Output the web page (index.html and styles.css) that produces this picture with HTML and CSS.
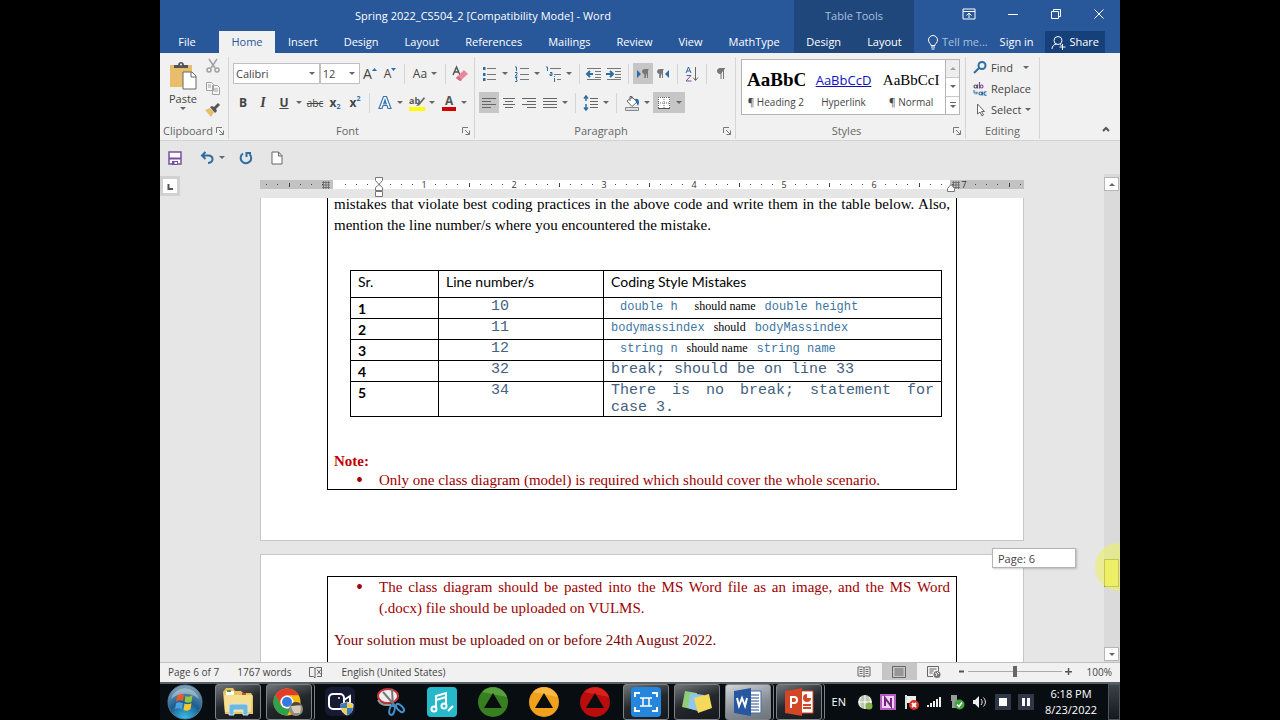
FILE: index.html
```html
<!DOCTYPE html>
<html lang="en">
  <head>
    <meta charset="utf-8">
    <meta name="viewport" content="width=device-width, initial-scale=1">
    <title>Spring 2022_CS504_2 [Compatibility Mode] - Word</title>
    <link rel="stylesheet" href="styles.css">
  </head>
  <body>
    <div class="screen">
      <header class="header">
        <div class="main-tabs">
          <h1 class="title">Spring 2022_CS504_2 [Compatibility Mode] - Word</h1>
          <nav class="tabs">
            <button class="tab file">File</button>
            <button class="tab active">Home</button>
            <button class="tab">Insert</button>
            <button class="tab">Design</button>
            <button class="tab">Layout</button>
            <button class="tab">References</button>
            <button class="tab">Mailings</button>
            <button class="tab">Review</button>
            <button class="tab">View</button>
            <button class="tab">MathType</button>
          </nav>
        </div>
        <div class="table-tools">
          <div class="title">Table Tools</div>
          <nav class="tabs">
            <button class="tab">Design</button>
            <button class="tab">Layout</button>
          </nav>
        </div>
        <div class="window-tools">
          <div class="window-buttons">
            <button aria-label="Ribbon display options"><svg width="14" height="12" viewBox="0 0 14 12"><path d="M1 1h12v10H1zM1 3.500h12M7 10V5M4.500 7.500 7 5l2.500 2.500" /></svg></button>
            <button aria-label="Minimize"><svg width="12" height="12" viewBox="0 0 12 12"><path d="M1 6.500h10" /></svg></button>
            <button aria-label="Restore"><svg width="12" height="12" viewBox="0 0 12 12"><path d="M1.500 3.500h7v7h-7zM3.500 3.500v-2h7v7h-2" /></svg></button>
            <button aria-label="Close"><svg width="12" height="12" viewBox="0 0 12 12"><path d="m1.500 1.500 9 9m0-9-9 9" /></svg></button>
          </div>
          <div class="account">
            <button class="tell"><svg width="12" height="15" viewBox="0 0 12 15"><path d="M4 10.500C4 8.500 1.500 8 1.500 5a4.500 4.500 0 0 1 9 0c0 3-2.500 3.500-2.500 5.500zM4 12h4M4.500 14h3" /></svg>Tell me...</button>
            <button>Sign in</button>
            <button class="share"><svg width="15" height="15" viewBox="0 0 15 15"><path d="M1 14c0-3 2-4.500 4.500-5M7 1.500a4 4 0 1 1 0 8 4 4 0 0 1 0-8zM9 9.500l1.500 1M11.500 9v6M8.500 12h6" /></svg>Share</button>
          </div>
        </div>
      </header>

      <section class="ribbon">
        <div class="group clipboard">
          <div class="clip-tools">
            <button class="paste">
              <svg width="28" height="30" viewBox="0 0 28 30">
                <path d="M1 4h22v22H1z" fill="#e8bd6c" />
                <path d="M5 7V4h4c0-4 6-4 6 0h4v3z" fill="#555" /><circle cx="12" cy="3.500" r="1" fill="#eee" />
                <path d="M14 11h9l4 4v13H14z" fill="#fff" stroke="#666" /><path d="M22 11v5h5" fill="none" stroke="#666" />
              </svg>
              Paste
              <span class="caret"></span>
            </button>
            <div class="clip-small">
              <button aria-label="Cut"><svg width="14" height="14" viewBox="0 0 14 14" fill="none" stroke="#a0a0a0" stroke-width="1.500"><path d="m3 0 6 9M11 0 5 9" /><circle cx="3" cy="11" r="2" /><circle cx="11" cy="11" r="2" /></svg></button>
              <button aria-label="Copy"><svg width="14" height="14" viewBox="0 0 14 14" fill="#f6f6f6" stroke="#a0a0a0"><path d="M.5 1.500h5l2 2v6h-7zM6.500 4.500h5l2 2v7h-7z" /><path d="M2 4h3M2 6h3M8 8h4M8 10h4" /></svg></button>
              <button aria-label="Format Painter"><svg width="15" height="14" viewBox="0 0 15 14"><path d="m0 7 5-2 4 4-3 5z" fill="#e8bd6c" /><path d="m5 4 2-1 2 1 4-4 2 2-4 4 1 2-2 2z" fill="#555" /></svg></button>
            </div>
          </div>
          <div class="group-label"><span>Clipboard</span><svg class="launch" width="8" height="8"><use href="#launcher" /></svg></div>
        </div>

        <div class="group">
          <div class="row">
            <label class="combo font-name"><select aria-label="Font"><option>Calibri</option></select><span class="caret"></span></label>
            <label class="combo font-size"><select aria-label="Font size"><option>12</option></select><span class="caret"></span></label>
            <button class="btn grow" aria-label="Grow font">A<svg width="5" height="12"><path d="M0 3h5L2.500 0z" fill="#2e6da4" /></svg></button>
            <button class="btn grow small" aria-label="Shrink font">A<svg width="5" height="12"><path d="M0 0h5L2.500 3z" fill="#2e6da4" /></svg></button>
            <i class="sep"></i>
            <button class="btn wide case">Aa<span class="caret"></span></button>
            <i class="sep"></i>
            <button class="btn" aria-label="Clear formatting"><svg width="16" height="16" viewBox="0 0 16 16"><path d="m1 9 3.500-8L8 9M2 6h5" fill="none" stroke="#555" stroke-width="1.500" /><path d="m4 12 8-8 4 4-8 7z" fill="#e8899a" /><path d="m4 12 2-2 4 4-2 1z" fill="#d9687c" /></svg></button>
          </div>
          <div class="row">
            <button class="btn bold">B</button>
            <button class="btn italic">I</button>
            <button class="btn wide underline"><span class="glyph">U</span><span class="caret"></span></button>
            <button class="btn strike">abc</button>
            <button class="btn script">x<sub>2</sub></button>
            <button class="btn script">x<sup>2</sup></button>
            <i class="sep"></i>
            <button class="btn wide" aria-label="Text effects"><svg width="16" height="16" viewBox="0 0 16 16"><path d="M6.500 1.500h3l4.500 12h-3l-1-3H6l-1 3H2zM8 5l-1.300 4h2.600z" fill="#fff" stroke="#3a74b4" stroke-width="1.200" /></svg><span class="caret"></span></button>
            <button class="btn wide" aria-label="Highlight"><svg width="16" height="16" viewBox="0 0 16 16"><text x="0" y="9" font-size="9" font-weight="bold" fill="#555">ab</text><path d="m15 2-6 7-2 2 3-.5 6-7z" fill="#666" /><path d="M0 12h16v4H0z" fill="#ff0" /></svg><span class="caret"></span></button>
            <button class="btn wide" aria-label="Font color"><svg width="16" height="16" viewBox="0 0 16 16"><text x="4" y="10" font-size="12" font-weight="bold" fill="#555">A</text><path d="M1 12h14v4H1z" fill="#d40000" /></svg><span class="caret"></span></button>
          </div>
          <div class="group-label"><span>Font</span><svg class="launch" width="8" height="8"><use href="#launcher" /></svg></div>
        </div>

        <div class="group">
          <div class="row">
            <button class="btn wide" aria-label="Bullets"><svg width="16" height="16" viewBox="0 0 16 16"><path d="M5 2.500h9M5 8.500h9M5 13.500h9" stroke="#777" /><path d="M1 1h2.500v3H1zM1 7h2.500v3H1zM1 12h2.500v3H1z" fill="#2e6da4" /></svg><span class="caret"></span></button>
            <button class="btn wide" aria-label="Numbering"><svg width="16" height="16" viewBox="0 0 16 16"><path d="M6 2.500h9M6 8.500h9M6 13.500h9" stroke="#777" /><path d="M1 1h1.500v4M1 6.500h2v1.500l-2 2h2.500M1 11.500h2l-1 1.500 1 1v1.500H1" fill="none" stroke="#2e6da4" /></svg><span class="caret"></span></button>
            <button class="btn wide" aria-label="Multilevel list"><svg width="16" height="16" viewBox="0 0 16 16"><path d="M4 2.500h11M8 8.500h7M11 13.500h4" stroke="#777" /><path d="M0 1h1.500v4M4 6.500h2v3H4v-1.500h2M8.500 10v1M8.500 12v4" fill="none" stroke="#2e6da4" /></svg><span class="caret"></span></button>
            <i class="sep"></i>
            <button class="btn" aria-label="Decrease indent"><svg width="16" height="14" viewBox="0 0 16 14"><path d="M1 1.500h14M9 4.500h6M9 7.500h6M9 10.500h6M1 12.500h14" stroke="#777" /><path d="M7 7H1.500M4 4 1 7l3 3" fill="none" stroke="#2e6da4" stroke-width="2" /></svg></button>
            <button class="btn" aria-label="Increase indent"><svg width="16" height="14" viewBox="0 0 16 14"><path d="M1 1.500h14M9 4.500h6M9 7.500h6M9 10.500h6M1 12.500h14" stroke="#777" /><path d="M0 7h6M4 4l3 3-3 3" fill="none" stroke="#2e6da4" stroke-width="2" /></svg></button>
            <i class="sep"></i>
            <button class="btn pressed" aria-label="Left to right"><svg width="14" height="12" viewBox="0 0 14 12"><path d="m1 2 4 4-4 4z" fill="#2e6da4" /><path d="M12.500 1.500h-4a2 2 0 0 0 0 4H9V10M9 2v8M11.500 2v8" fill="#777" stroke="#777" /></svg></button>
            <button class="btn" aria-label="Right to left"><svg width="14" height="12" viewBox="0 0 14 12"><path d="m13 2-4 4 4 4z" fill="#2e6da4" /><path d="M7.500 1.500h-4a2 2 0 0 0 0 4H4V10M4 2v8M6.500 2v8" fill="#777" stroke="#777" /></svg></button>
            <i class="sep"></i>
            <button class="btn" aria-label="Sort"><svg width="14" height="16" viewBox="0 0 14 16"><path d="M1 7 3.500 1 6 7M2 5h3" fill="none" stroke="#2e6da4" /><path d="M1.500 9.500H6L1 15h5.500" fill="none" stroke="#80489c" /><path d="M10.500 1v13M8 11.500l2.500 3 2.500-3" fill="none" stroke="#666" /></svg></button>
            <i class="sep"></i>
            <button class="btn" aria-label="Show marks"><svg width="12" height="13" viewBox="0 0 12 13"><path d="M10 1.500H5a2.500 2.500 0 0 0 0 5h1M6 1v11M8.500 1v11" fill="#777" stroke="#777" /></svg></button>
          </div>
          <div class="row">
            <button class="btn pressed" aria-label="Align left"><svg width="14" height="12" viewBox="0 0 14 12"><path d="M0 1.500h14M0 4.500h9M0 7.500h14M0 10.500h9" stroke="#666" /></svg></button>
            <button class="btn" aria-label="Center"><svg width="14" height="12" viewBox="0 0 14 12"><path d="M1 1.500h12M3 4.500h8M1 7.500h12M3 10.500h8" stroke="#666" /></svg></button>
            <button class="btn" aria-label="Align right"><svg width="14" height="12" viewBox="0 0 14 12"><path d="M0 1.500h14M5 4.500h9M0 7.500h14M5 10.500h9" stroke="#666" /></svg></button>
            <button class="btn wide" aria-label="Justify"><svg width="16" height="12" viewBox="0 0 16 12"><path d="M1 1.500h14M1 4.500h14M1 7.500h14M1 10.500h14" stroke="#666" /></svg><span class="caret"></span></button>
            <i class="sep"></i>
            <button class="btn wide" aria-label="Line spacing"><svg width="16" height="16" viewBox="0 0 16 16"><path d="M7 3.500h8M7 6.500h8M7 9.500h8M7 12.500h8" stroke="#666" /><path d="M3 1v5M3 9v6M1 3.500 3 1l2 2.500M1 12.500 3 15l2-2.500" fill="none" stroke="#2e6da4" stroke-width="1.500" /></svg><span class="caret"></span></button>
            <i class="sep"></i>
            <button class="btn wide" aria-label="Shading"><svg width="16" height="16" viewBox="0 0 16 16"><path d="m3 6 5-4 5 5-5 4.500z" fill="#fff" stroke="#666" /><path d="M6 6V1.500h2V4" fill="none" stroke="#666" /><path d="M11 4c4-1 5 3 3 7l-2-4z" fill="#2e6da4" /><path d="M1.500 12.500h13v3h-13z" fill="#ddd" stroke="#888" /></svg><span class="caret"></span></button>
            <button class="btn wide pressed" aria-label="Borders"><svg width="16" height="16" viewBox="0 0 16 16"><path d="M2 2h12v12H2z" fill="#fff" /><path d="M2.500 2v12M8 2v12M13.500 2v12M2 2.500h12M2 8h12" stroke="#666" stroke-dasharray="1 1" /><path d="M2 13.500h12" stroke="#555" /></svg><span class="caret"></span></button>
          </div>
          <div class="group-label"><span>Paragraph</span><svg class="launch" width="8" height="8"><use href="#launcher" /></svg></div>
        </div>

        <div class="group">
          <div class="gallery">
            <button class="style heading-2"><span class="sample">AaBbC</span><span>¶ Heading 2</span></button>
            <button class="style hyperlink"><span class="sample">AaBbCcD</span><span>Hyperlink</span></button>
            <button class="style normal"><span class="sample">AaBbCcI</span><span>¶ Normal</span></button>
            <div class="gallery-nav">
              <button class="off" aria-label="Previous styles"><span class="caret up"></span></button>
              <button aria-label="Next styles"><span class="caret"></span></button>
              <button class="more" aria-label="More styles"><span class="caret"></span></button>
            </div>
          </div>
          <div class="group-label"><span>Styles</span><svg class="launch" width="8" height="8"><use href="#launcher" /></svg></div>
        </div>

        <div class="group">
          <div class="editing">
            <button><svg width="14" height="13" viewBox="0 0 14 13" fill="none" stroke="#2e6da4" stroke-width="2"><circle cx="9" cy="4.500" r="3.500" /><path d="m6 7-5 5" /></svg>Find<span class="caret far"></span></button>
            <button><svg width="14" height="14" viewBox="0 0 14 14" fill="none"><circle cx="2.500" cy="4.500" r="1.500" stroke="#555" stroke-width="1.200" /><path d="M4.500 2.500v4" stroke="#555" stroke-width="1.200" /><circle cx="8.500" cy="4.500" r="1.500" stroke="#80489c" stroke-width="1.200" /><path d="M6.500 0v6.500" stroke="#80489c" stroke-width="1.200" /><circle cx="7.500" cy="11.500" r="1.500" stroke="#2e6da4" stroke-width="1.200" /><path d="M9.500 9.500v4M13.500 10a1.700 1.700 0 1 0 0 3" stroke="#2e6da4" stroke-width="1.200" /><path d="M1 8v3h3M3 9.500 4.500 11 3 12.500" stroke="#2e6da4" /></svg>Replace</button>
            <button><svg width="14" height="14" viewBox="0 0 14 14"><path d="M4.500 1v10l2.500-2 2 4 1.500-1-2-3.500h3z" fill="#fff" stroke="#666" /></svg>Select<span class="caret"></span></button>
          </div>
          <div class="group-label"><span>Editing</span></div>
        </div>
        <button class="collapse" aria-label="Collapse the ribbon"><svg width="8" height="6" viewBox="0 0 8 6"><path d="m1 5 3-3 3 3" fill="none" stroke="#555" stroke-width="2" /></svg></button>
      </section>

      <div class="quick-access">
        <button aria-label="Save"><svg width="14" height="14" viewBox="0 0 14 14"><path d="M1 1h12v12H1z" fill="#fff" stroke="#7a4fa3" stroke-width="1.500" /><path d="M1 7.500h12" stroke="#7a4fa3" stroke-width="2" /><path d="M4 10h6v4H4z" fill="#7a4fa3" /><path d="M6.500 11H9v2H6.500z" fill="#fff" /></svg></button>
        <button class="undo" aria-label="Undo"><svg width="14" height="13" viewBox="0 0 14 13"><path d="M2 4.500h6c6 0 6 7 0 7.500M5.500 1 2 4.500 5.500 8" fill="none" stroke="#2e6da4" stroke-width="2" /></svg><span class="caret"></span></button>
        <button aria-label="Repeat"><svg width="14" height="14" viewBox="0 0 14 14"><path d="M4 2.500A5.300 5.300 0 1 0 10.500 3M7.500 6V2H12" fill="none" stroke="#2e6da4" stroke-width="2" /></svg></button>
        <button aria-label="New"><svg width="12" height="14" viewBox="0 0 12 14"><path d="M1 1h6.500L11 4.500V13H1zM7.500 1v4H11" fill="#fff" stroke="#666" /></svg></button>
      </div>

      <main class="workspace">
        <button class="tab-stop" aria-label="Tab stop"><svg width="14" height="14" viewBox="0 0 14 14"><path d="M0 0h14v14H0z" fill="#fff" /><path d="M5.500 5v5H10" fill="none" stroke="#555" stroke-width="2" /></svg></button>
        <svg class="ruler" viewBox="0 0 764 22" height="22">
          <defs>
            <!-- one inch: eight divisions, the half inch as a short bar -->
            <pattern id="inch" width="90" height="9" x="74" y="4" patternUnits="userSpaceOnUse">
              <path d="M11 4h1v1h-1zM22 4h1v1h-1zM33 4h1v1h-1zM45 3h1v4h-1zM56 4h1v1h-1zM67 4h1v1h-1zM78 4h1v1h-1z" fill="#444" />
            </pattern>
            <symbol id="hash" viewBox="0 0 8 8"><path d="M1.500 0v8M4 0v8M6.500 0v8M0 1.500h8M0 4h8M0 6.500h8" stroke="#666" stroke-width=".8" /></symbol>
          </defs>
          <path d="M0 4h764v9H0z" fill="#fff" />
          <path d="M0 4h73v9H0zM690 4h74v9h-74z" fill="#c2c2c2" />
          <path d="M0 4h764v9H0z" fill="url(#inch)" />
          <use href="#hash" x="62" y="5" width="8" height="8" />
          <use href="#hash" x="692" y="5" width="8" height="8" />
          <g class="ruler-numbers">
            <text x="164" y="12">1</text><text x="254" y="12">2</text><text x="344" y="12">3</text><text x="434" y="12">4</text>
            <text x="524" y="12">5</text><text x="614" y="12">6</text><text x="704" y="12">7</text>
          </g>
          <path d="M115.500 1.500h7v3l-3.500 4-3.500-4zM119 8.500l3.500 3v3h-7v-3zM115.500 15.500h7v5h-7zM687.500 15.500v-3l3.500-4 3.500 4v3z" fill="#fff" stroke="#777" />
        </svg>

        <div class="document">
          <article class="page first">
            <div class="frame">
              <p class="intro">mistakes that violate best coding practices in the above code and write them in the table below. Also, mention the line number/s where you encountered the mistake.</p>
              <table class="mistakes">
                <colgroup><col class="sr"><col class="line"><col></colgroup>
                <thead>
                  <tr><th>Sr.</th><th>Line number/s</th><th>Coding Style Mistakes</th></tr>
                </thead>
                <tbody>
                  <tr><td class="num">1</td><td class="at">10</td><td class="fix in">double h<b class="far">should name</b>double height</td></tr>
                  <tr><td class="num">2</td><td class="at">11</td><td class="fix">bodymassindex<b>should</b>bodyMassindex</td></tr>
                  <tr><td class="num">3</td><td class="at">12</td><td class="fix in">string n<b>should name</b>string name</td></tr>
                  <tr><td class="num">4</td><td class="at">32</td><td class="code">break; should be on line 33</td></tr>
                  <tr><td class="num">5</td><td class="at">34</td><td class="code">There is no break; statement for case 3.</td></tr>
                </tbody>
              </table>
              <p class="note">Note:</p>
              <ul class="notes">
                <li>Only one class diagram (model) is required which should cover the whole scenario.</li>
              </ul>
            </div>
          </article>
          <article class="page second">
            <div class="frame">
              <ul class="notes loose">
                <li>The class diagram should be pasted into the MS Word file as an image, and the MS Word (.docx) file should be uploaded on VULMS.</li>
              </ul>
              <p class="deadline">Your solution must be uploaded on or before 24th August 2022.</p>
            </div>
          </article>
        </div>

        <div class="scrollbar">
          <button aria-label="Scroll up"><span class="caret up"></span></button>
          <div class="track"><div class="thumb"><div class="page-tip">Page: 6</div></div></div>
          <button aria-label="Scroll down"><span class="caret"></span></button>
        </div>
      </main>

      <footer class="status">
        <span>Page 6 of 7</span>
        <span>1767 words</span>
        <svg width="14" height="12" viewBox="0 0 14 12"><path d="M6 2.500 4.500 1.500H.5v9h4L6 12V2.500l1.500-1h5v9H8M8 3.500l4 5m0-5-4 5" fill="none" stroke="#666" /></svg>
        <span>English (United States)</span>
        <div class="views">
          <button aria-label="Read mode"><svg width="14" height="12" viewBox="0 0 14 12"><path d="M7 2 5.500 1H1v9h4.500L7 11l1.500-1H13V1H8.500zv9M2.500 3.500h3M2.500 5.500h3M2.500 7.500h3M8.500 3.500h3M8.500 5.500h3M8.500 7.500h3" fill="none" stroke="#666" /></svg></button>
          <button class="pressed" aria-label="Print layout"><svg width="14" height="12" viewBox="0 0 14 12"><path d="M.5.5h13v11H.5zM2.500 3h9M2.500 5h9M2.500 7h9M2.500 9h9" fill="none" stroke="#666" /></svg></button>
          <button aria-label="Web layout"><svg width="14" height="12" viewBox="0 0 14 12"><path d="M6 10.500H.5V.5h11V5M2.500 3h7M2.500 5h4M2.500 7h3" fill="none" stroke="#666" /><circle cx="10" cy="8.500" r="3.500" fill="#777" /><path d="m8 7 2 1-1 2M10 6l2 2" stroke="#eee" fill="none" /></svg></button>
        </div>
        <div class="zoom">
          <button aria-label="Zoom out"><svg width="7" height="7"><path d="M1 2.500h5v2H1z" fill="#555" /></svg></button>
          <input type="range" min="0" max="100" value="50" aria-label="Zoom">
          <button aria-label="Zoom in"><svg width="7" height="7"><path d="M0 3h7v1.500H0zM2.800 0h1.500v7H2.800z" fill="#555" /></svg></button>
          <span>100%</span>
        </div>
      </footer>

      <nav class="taskbar">
        <button class="start" aria-label="Start"><svg width="36" height="36" viewBox="0 0 36 36"><circle cx="18" cy="18" r="17" fill="url(#orb)" stroke="#54809c" /><path d="M10 12c2-2 4-2 7-1l-1 6c-3-1-5-1-7 1z" fill="#e85a2a" /><path d="M18.500 12c2 1 5 1 7-1l-1 7c-3 1-5 1-7-.5z" fill="#92c83e" /><path d="M9 19.500c2-2 4-1.500 7-.5l-1 6c-3-1-5-1-7 .5z" fill="#4aa3e0" /><path d="M17.500 19.500c2 1 5 1 7-.5l-1 6c-2 2-4 2-7 1z" fill="#fbc72f" /><path d="M4 15a14.500 14.500 0 0 1 28 0C24 8 12 8 4 15z" fill="#fff" opacity=".35" /></svg></button>
        <button class="task open" aria-label="Explorer"><svg width="32" height="30" viewBox="0 0 32 30"><path d="M1 5 4 1h7l2 3h6l2 2h8l2 3v18H3z" fill="#e8c25c" /><path d="M4 4h8v4H4z" fill="#fff" /><path d="M5 3h4v2H5z" fill="#4a9c38" /><path d="M20 6h4v2h-4z" fill="#d34b31" /><path d="M2 8h28l-1 17H3z" fill="#f5df93" /><path d="M7 28V20c0-2 1-3 3-3h13c2 0 3 1 3 3v8h-5v-5h-9v5z" fill="#70b7dc" stroke="#c7e9f8" /></svg></button>
        <button class="task open stacked" aria-label="Chrome"><svg width="32" height="30" viewBox="0 0 32 30"><circle cx="14" cy="15" r="13.500" fill="#fbbc09" /><path d="M2.300 8.200a13.500 13.500 0 0 1 23.400 0H14a7 7 0 0 0-6 10z" fill="#e53a2e" /><path d="M2.300 8.200A13.500 13.500 0 0 0 14 28.500L20 18a7 7 0 0 1-12 0z" fill="#2fa04e" /><circle cx="14" cy="15" r="6.500" fill="#fff" /><circle cx="14" cy="15" r="5" fill="#3478e5" /><circle cx="23" cy="22" r="7" fill="#948b7c" /><path d="M18 20c2-3 8-3 10 0l-1 6h-6z" fill="#d4cbbb" /><path d="M18 19c1-5 8-5 10-1z" fill="#4d443c" /></svg></button>
        <button class="task" aria-label="Recorder"><svg width="32" height="30" viewBox="0 0 32 30"><rect x="1" width="30" height="29" rx="6" fill="#161a33" /><rect x="5" y="7" width="15" height="15" rx="4" fill="none" stroke="#fff" stroke-width="2" /><path d="m20 13 6-4v9" fill="none" stroke="#fff" stroke-width="2" /><circle cx="15" cy="11" r="1" fill="#fff" /><path d="m23 15 6 2c0 6-1 9-6 11-5-2-6-5-6-11z" fill="#f4ce3c" stroke="#ddd" /><path d="M23 15v6h-6v-4zM23 21h6c-1 4-2 6-6 7z" fill="#397bc5" /></svg></button>
        <button class="task" aria-label="Snipping tool"><svg width="32" height="30" viewBox="0 0 32 30"><ellipse cx="13" cy="9" rx="10" ry="7" fill="#eee" stroke="#c7333c" stroke-width="2" /><path d="M3 13c3 6 9 5 13 5" stroke="#999" stroke-width="2" fill="none" /><path d="m8 5 14 16M17 2l1 18" stroke="#777" stroke-width="2" /><ellipse cx="17" cy="23" rx="2.500" ry="5" fill="none" stroke="#3e91cc" stroke-width="2" transform="rotate(15 17 23)" /><ellipse cx="25" cy="21" rx="2.500" ry="5" fill="none" stroke="#3e91cc" stroke-width="2" transform="rotate(-45 25 21)" /></svg></button>
        <button class="task" aria-label="Music editor"><svg width="32" height="30" viewBox="0 0 32 30"><rect x="1" width="30" height="30" rx="4" fill="#25b9ca" /><path d="M10 22V9l10-3v13M10 13l10-3M22 24l5-5" fill="none" stroke="#fff" stroke-width="2" /><circle cx="8" cy="22" r="2.500" fill="#25b9ca" stroke="#fff" stroke-width="2" /><circle cx="18" cy="19" r="2.500" fill="#25b9ca" stroke="#fff" stroke-width="2" /></svg></button>
        <button class="task" aria-label="Green"><svg width="30" height="30" viewBox="0 0 30 30"><circle cx="15" cy="15" r="15" fill="#387f22" /><path d="M4 5a15 15 0 0 1 25 5z" fill="#58a03d" /><path d="m15 6 9 15H6z" fill="#080d0d" /></svg></button>
        <button class="task" aria-label="Orange"><svg width="30" height="30" viewBox="0 0 30 30"><circle cx="15" cy="15" r="15" fill="#efa01c" /><path d="M4 5a15 15 0 0 1 25 5z" fill="#fbb944" /><path d="m15 6 9 15H6z" fill="#080d0d" /></svg></button>
        <button class="task" aria-label="Red"><svg width="30" height="30" viewBox="0 0 30 30"><circle cx="15" cy="15" r="15" fill="#b90c0c" /><path d="M4 5a15 15 0 0 1 25 5z" fill="#db2020" /><path d="m15 6 9 15H6z" fill="#080d0d" /></svg></button>
        <button class="task open" aria-label="Screen capture"><svg width="32" height="30" viewBox="0 0 32 30"><rect x="1" width="30" height="30" rx="4" fill="#2487dd" /><path d="M5 10V6h5M22 6h5v4M5 20v4h5M22 24h5v-4" fill="none" stroke="#fff" stroke-width="2" /><path d="M10 11h12M10 19h12M13 11v8M19 11v8" fill="none" stroke="#fff" stroke-width="1.500" /></svg></button>
        <button class="task open" aria-label="Sticky notes"><svg width="32" height="30" viewBox="0 0 32 30"><path d="m4 4 12 2-2 17-13-3z" fill="#91cc79" /><path d="m9 6 14 2-3 17-13-4z" fill="#90c7e7" /><path d="m13 11 15-4 3 14-14 5z" fill="#f4d95b" /></svg></button>
        <button class="task open current stacked" aria-label="Word"><svg width="32" height="30" viewBox="0 0 32 30"><path d="M16 4h13v22H16z" fill="#fff" stroke="#3e6db0" /><path d="M19 8h8M19 11h8M19 14h8M19 17h8M19 20h8M19 23h8" stroke="#294c83" /><path d="m2 4 17-3v28L2 26z" fill="#2757a0" /><path d="m5 11 2 8 3-8 3 8 2-8" fill="none" stroke="#fff" stroke-width="2" /></svg></button>
        <button class="task open stacked" aria-label="PowerPoint"><svg width="32" height="30" viewBox="0 0 32 30"><path d="M16 4h14v22H16z" fill="#fff" stroke="#d24726" /><circle cx="24" cy="11" r="4" fill="#d24726" /><path d="M24 11V6h5v5z" fill="#fff" /><path d="M20 18h8M20 21h8" stroke="#d24726" stroke-width="2" /><path d="m2 4 17-3v28L2 26z" fill="#d24726" /><path d="M8 21V10h3a3 3 0 0 1 0 6H8" fill="none" stroke="#fff" stroke-width="2" /></svg></button>
        <div class="tray">
          <span class="lang">EN</span>
          <svg width="16" height="16" viewBox="0 0 16 16"><circle cx="8" cy="8" r="7" fill="#b9c7b2" /><path d="M8 1v14M1 8h14M4 3c-2 4-2 6 0 10M12 3c2 4 2 6 0 10" stroke="#fff" fill="none" /><circle cx="12" cy="12" r="3.500" fill="#83b546" /></svg>
          <svg width="16" height="16" viewBox="0 0 16 16"><path d="M1 1h14v14H1z" fill="#efd5f2" stroke="#b65fc0" stroke-width="2" /><path d="M5 12V4l6 8V4" fill="none" stroke="#73257c" stroke-width="2" /></svg>
          <svg width="16" height="16" viewBox="0 0 16 16"><path d="M3 1v14" stroke="#ddd" stroke-width="2" /><path d="M4 2h9v7H4z" fill="#eee" /><circle cx="11" cy="11" r="5" fill="#d83329" /><path d="m9 9 4 4m0-4-4 4" stroke="#fff" stroke-width="2" /></svg>
          <svg width="16" height="16" viewBox="0 0 16 16"><path d="M2 13v-2M5 13V9M8 13V7M11 13V5M14 13V3" stroke="#eee" stroke-width="2" /></svg>
          <svg width="16" height="16" viewBox="0 0 16 16"><path d="M2 1h6v6H2zM3 7h4v7H3z" fill="#999" /><circle cx="10.500" cy="10.500" r="5" fill="#3fa63a" /><path d="m8 10.500 2 2 3-4" stroke="#fff" stroke-width="1.500" fill="none" /></svg>
          <svg width="16" height="16" viewBox="0 0 16 16"><path d="M1 6h2l4-4v12l-4-4H1z" fill="#eee" /><path d="M9 5c1.500 2 1.500 4 0 6M11.500 3.500c2.500 3 2.500 6 0 9" stroke="#eee" fill="none" /></svg>
          <svg width="16" height="16" viewBox="0 0 16 16"><path d="M0 0h16v16H0z" fill="#303746" /><path d="M4 4h8v8H4z" fill="#fff" /></svg>
          <svg width="16" height="16" viewBox="0 0 16 16"><path d="M0 0h16v16H0z" fill="#303746" /><path d="M4 4h3v8H4zM9 4h3v8H9z" fill="#fff" /></svg>
        </div>
        <div class="clock"><span>6:18 PM</span><span>8/23/2022</span></div>
        <button class="peek" aria-label="Show desktop"></button>
      </nav>
    </div>

    <svg class="defs" width="0" height="0">
      <symbol id="launcher" viewBox="0 0 8 8"><path d="M.5 6V.5H6M3 3l4 4M7.500 3.500v4h-4" fill="none" stroke="#777" /></symbol>
      <radialGradient id="orb" cy="1" r="1"><stop offset="0" stop-color="#37c6ee" /><stop offset=".5" stop-color="#1c5c90" /><stop offset="1" stop-color="#86a5b8" /></radialGradient>
    </svg>
  </body>
</html>
```
FILE: styles.css
```css
* {
  box-sizing: border-box;
}

body {
  margin: 0;
  background: #000;
  color: #444;
  font-family: "Open Sans", "Noto Sans", sans-serif;
  font-size: 11px;
  line-height: 16px;
}

button,
select,
input {
  margin: 0;
  padding: 0;
  border: 0;
  background: none;
  color: inherit;
  font: inherit;
}

svg {
  flex: none;
  overflow: visible;
}

.defs {
  position: absolute;
}

.screen {
  display: flex;
  flex-direction: column;
  width: 75%;
  height: 100vh;
  margin: 0 auto;
  overflow: hidden;
  background: #e6e6e6;
}

.caret {
  flex: none;
  border: 3px solid transparent;
  border-top-color: #666;
  border-bottom: 0;
}

.caret.up {
  border-top: 0;
  border-bottom: 3px solid #666;
}

/* title bar and tabs */

.header {
  display: grid;
  grid-template-columns: 634fr 120fr 206fr;
  background: #28579a;
  color: #fff;
  white-space: nowrap;
}

.header > div {
  min-width: 0;
}

.title {
  height: 31px;
  margin: 0;
  font-size: 11px;
  font-weight: normal;
  line-height: 31px;
  text-align: center;
}

.main-tabs .title {
  padding-left: 12px;
}

.tabs {
  display: flex;
  height: 22px;
}

.tab {
  padding: 0 13px;
}

.tab.file {
  width: 59px;
  padding: 0 5px 0 0;
}

.tab.active {
  width: 56px;
  padding: 0;
  background: #f1f1f1;
  color: #28579a;
}

.table-tools {
  background: #20477b;
}

.table-tools .title {
  color: #a9c0e0;
}

.table-tools .tabs {
  justify-content: center;
}

.window-buttons {
  display: flex;
  justify-content: space-around;
  height: 31px;
  padding: 0 0 0 32px;
}

.window-buttons svg,
.account svg {
  fill: none;
  stroke: #fff;
}

.account {
  display: flex;
  align-items: center;
  justify-content: space-between;
  height: 22px;
  padding: 0 15px 0 13px;
}

.account button {
  display: flex;
  align-items: center;
  gap: 3px;
  height: 22px;
}

.account .tell {
  color: #a9c0e0;
}

.account .share {
  padding: 0 6px;
  background: #164079;
}

/* ribbon */

.ribbon {
  display: grid;
  grid-template-columns: 69fr 246fr 261fr 230fr 74fr 80fr;
  height: 88px;
  padding-top: 4px;
  border-bottom: 1px solid #d2d2d2;
  background: #f1f1f1;
}

.group {
  display: flex;
  flex-direction: column;
  min-width: 0;
  margin-bottom: 1px;
  padding: 2px 4px 0;
  border-right: 1px solid #d5d5d5;
}

.group-label {
  display: flex;
  align-items: center;
  height: 16px;
  margin-top: auto;
  color: #666;
}

.group-label span {
  flex: 1;
  text-align: center;
}

.row {
  display: flex;
  align-items: center;
  height: 29px;
}

.btn {
  display: flex;
  flex: none;
  align-items: center;
  justify-content: center;
  width: 20px;
  height: 21px;
  font-size: 12px;
}

.btn.wide {
  gap: 4px;
  width: 32px;
}

.pressed {
  background: #c6c6c6;
}

.sep {
  flex: none;
  width: 1px;
  height: 20px;
  margin: 0 4px;
  background: #d5d5d5;
}

.combo {
  position: relative;
  height: 21px;
  border: 1px solid #c0c0c0;
  background: #fff;
}

.combo select {
  width: 100%;
  height: 19px;
  padding-left: 2px;
  appearance: none;
}

.combo .caret {
  position: absolute;
  top: 8px;
  right: 4px;
}

.font-name {
  width: 88px;
}

.font-size {
  width: 41px;
}

.grow {
  font-size: 14px;
}

.grow.small {
  font-size: 12px;
}

.bold,
.script {
  font-weight: bold;
}

.italic {
  font-family: "Liberation Serif", serif;
  font-size: 14px;
  font-style: italic;
  font-weight: bold;
}

.underline .glyph {
  width: 16px;
  font-weight: bold;
  text-decoration: underline;
}

.strike {
  font-size: 10px;
  text-decoration: line-through;
}

.script sub,
.script sup {
  padding: 3px 0;
  color: #2e6da4;
  font-size: 7px;
  line-height: 7px;
}

.script sub {
  align-self: flex-end;
}

.script sup {
  align-self: flex-start;
}

.clip-tools {
  display: flex;
  justify-content: space-between;
}

.paste {
  display: flex;
  flex-direction: column;
  align-items: center;
  width: 40px;
  padding-top: 2px;
}

.clip-small {
  display: flex;
  flex-direction: column;
  gap: 7px;
  padding-right: 4px;
}

.clip-small button {
  height: 15px;
}

.clipboard {
  padding-left: 3px;
}

.clipboard .group-label span {
  text-align: left;
}

/* style gallery */

.gallery {
  display: flex;
  height: 56px;
  margin: 0 1px;
  border: 1px solid #b5b5b5;
  background: #fff;
  white-space: nowrap;
}

.style {
  display: flex;
  flex: 1;
  flex-direction: column;
  align-items: center;
  min-width: 0;
  padding: 7px 5px 0;
  font-size: 10px;
}

.sample {
  height: 27px;
  color: #000;
  font-size: 13px;
  line-height: 26px;
}

.heading-2 .sample {
  max-width: 100%;
  overflow: hidden;
  font-family: "Liberation Serif", serif;
  font-size: 19px;
  font-weight: bold;
}

.hyperlink .sample {
  color: #1010c0;
  text-decoration: underline;
}

.normal .sample {
  font-family: "Liberation Serif", serif;
  font-size: 15px;
}

.gallery-nav {
  display: flex;
  flex-direction: column;
  width: 14px;
  border-left: 1px solid #b5b5b5;
}

.gallery-nav button {
  display: flex;
  flex: 1;
  flex-direction: column;
  align-items: center;
  justify-content: center;
}

.gallery-nav button + button {
  border-top: 1px solid #c8c8c8;
}

.gallery-nav .off {
  background: #e4e4e4;
  opacity: .6;
}

.gallery-nav .more::before {
  width: 6px;
  height: 1px;
  margin-bottom: 2px;
  background: #666;
  content: "";
}

.editing {
  margin-top: -2px;
}

.editing button {
  display: flex;
  align-items: center;
  gap: 4px;
  height: 21px;
  padding-left: 3px;
}

.editing .far {
  margin-left: 6px;
}

.collapse {
  align-self: end;
  justify-self: end;
  width: 28px;
  height: 14px;
}

.collapse svg {
  display: block;
  margin: 0 auto 8px;
}

.quick-access {
  display: flex;
  align-items: center;
  gap: 18px;
  height: 33px;
  padding-left: 8px;
}

.quick-access button {
  display: flex;
  align-items: center;
}

.quick-access .undo {
  gap: 5px;
}

.quick-access .undo + button {
  margin-left: -4px;
}

/* ruler, pages and scroll bar */

.workspace {
  display: grid;
  flex: 1;
  grid-template-columns: 100fr 764fr 80fr 16px;
  grid-template-rows: 24px 1fr;
  min-height: 0;
}

.tab-stop {
  width: 20px;
  height: 20px;
  margin-top: 2px;
  background: #d2d2d2;
}

.tab-stop svg {
  display: block;
  margin: 3px;
}

.ruler {
  align-self: start;
  width: 100%;
  margin-top: 2px;
}

.ruler-numbers {
  fill: #333;
  font-size: 9px;
  text-anchor: middle;
}

.document {
  grid-column: 2;
  grid-row: 2;
  overflow: hidden;
  color: #000;
  font-family: "Liberation Serif", serif;
  font-size: 15px;
  line-height: 21px;
}

.page {
  padding: 0 66px 50px;
  border: 1px solid #c6c6c6;
  background: #fff;
}

.page.first {
  margin: -5px 0 13px;
}

.page.second {
  padding-top: 21px;
}

.frame {
  padding: 0 6px;
  border: 1px solid #000;
}

.first .frame {
  border-top: 0;
}

.document p,
.notes {
  margin: 0;
}

.intro {
  text-align: justify;
}

.mistakes {
  width: 592px;
  max-width: 100%;
  margin: 34px 0 34px 16px;
  border-collapse: collapse;
  table-layout: fixed;
}

.mistakes .sr {
  width: 88px;
}

.mistakes .line {
  width: 165px;
}

.mistakes th,
.mistakes td {
  padding: 0 7px;
  border: 1px solid #000;
  vertical-align: top;
}

.mistakes th {
  height: 27px;
  font-family: Lato, sans-serif;
  font-size: 14px;
  font-weight: normal;
  text-align: left;
}

.mistakes .num {
  padding-top: 2px;
  font-family: Lato, sans-serif;
  font-size: 14px;
  font-weight: bold;
  line-height: 18px;
}

.mistakes .at,
.mistakes .code {
  color: #44617f;
  font-family: "Liberation Mono", monospace;
  font-size: 15px;
  line-height: 17px;
}

.mistakes .at {
  padding-left: 52px;
}

.mistakes .code {
  text-align: justify;
}

.mistakes .fix {
  color: #3c75a3;
  font-family: "Liberation Mono", monospace;
  font-size: 12px;
  line-height: 17px;
}

.mistakes .fix.in {
  padding-left: 16px;
}

.fix b {
  margin: 0 9px;
  color: #000;
  font-family: "Liberation Serif", serif;
  font-weight: normal;
}

.fix .far {
  margin-left: 17px;
}

.note {
  color: #c00000;
  font-weight: bold;
}

.notes {
  padding-left: 45px;
  color: #a00000;
  line-height: 17px;
  list-style: none;
  text-align: justify;
}

.notes li::before {
  float: left;
  margin-left: -23px;
  font-size: 20px;
  content: "•";
}

.notes.loose {
  line-height: 21px;
}

.deadline {
  padding: 11px 0 40px;
  color: #800000;
}

.scrollbar {
  display: flex;
  grid-column: 4;
  grid-row: 1 / 3;
  flex-direction: column;
  min-height: 0;
  padding: 3px 1px 1px 0;
  background: #dadada;
}

.scrollbar button {
  display: flex;
  flex: none;
  align-items: center;
  justify-content: center;
  height: 14px;
  border: 1px solid #b5b5b5;
  background: #fff;
}

.track {
  flex: 1;
  padding-top: 368px;
}

.thumb {
  position: relative;
  height: 28px;
  border: 1px solid #8a8a40;
  background: #eef06c;
}

/* pointer highlight around the thumb */
.thumb::before {
  position: absolute;
  top: -17px;
  left: -10px;
  width: 48px;
  height: 48px;
  border-radius: 50%;
  background: rgba(236, 240, 100, .6);
  content: "";
}

.page-tip {
  position: absolute;
  top: -12px;
  right: 42px;
  width: 84px;
  height: 20px;
  padding-left: 5px;
  border: 1px solid #b5b5b5;
  background: #fff;
  box-shadow: 1px 1px 2px rgba(0, 0, 0, .2);
  line-height: 20px;
}

/* status bar */

.status {
  display: flex;
  align-items: center;
  gap: 18px;
  height: 20px;
  padding: 0 8px 2px;
  border-top: 1px solid #c0c0c0;
  background: #f1f1f1;
  font-size: 10px;
  white-space: nowrap;
}

.views {
  display: flex;
  margin-left: auto;
}

.views button {
  display: flex;
  align-items: center;
  justify-content: center;
  width: 35px;
  height: 17px;
}

.zoom {
  display: flex;
  align-items: center;
  gap: 3px;
  margin-left: -12px;
}

.zoom button {
  display: flex;
}

.zoom input {
  width: 94px;
  height: 12px;
  appearance: none;
  background: linear-gradient(#aaa, #aaa) center / 100% 1px no-repeat;
}

.zoom input::-webkit-slider-thumb {
  width: 4px;
  height: 11px;
  appearance: none;
  background: #666;
}

.zoom span {
  margin-left: 12px;
}

/* taskbar */

.taskbar {
  display: flex;
  gap: 5px;
  height: 38px;
  border-top: 2px solid #596066;
  background: #080d12;
  color: #fff;
}

.start {
  display: flex;
  align-items: center;
  justify-content: center;
  width: 50px;
}

.task {
  display: flex;
  align-items: center;
  justify-content: center;
  width: 46px;
  border: 1px solid transparent;
  border-radius: 3px;
}

.task.open {
  border-color: #7d8286;
  background: linear-gradient(160deg, #71767a, #24282c 50%, #15191c);
}

.task.current {
  background: linear-gradient(160deg, #d2d6da, #858c93 60%, #6c7379);
}

.task.stacked {
  box-shadow: 2px 0 0 #080d12, 3px 0 0 #7d8286;
}

.tray {
  display: flex;
  align-items: center;
  gap: 7px;
  margin-left: auto;
}

.lang {
  margin-right: 4px;
}

.clock {
  display: flex;
  flex-direction: column;
  justify-content: center;
  width: 64px;
  text-align: center;
}

.peek {
  width: 12px;
  border: 1px solid #4d555c;
  background: linear-gradient(#3b4248, #14181c);
}
```
